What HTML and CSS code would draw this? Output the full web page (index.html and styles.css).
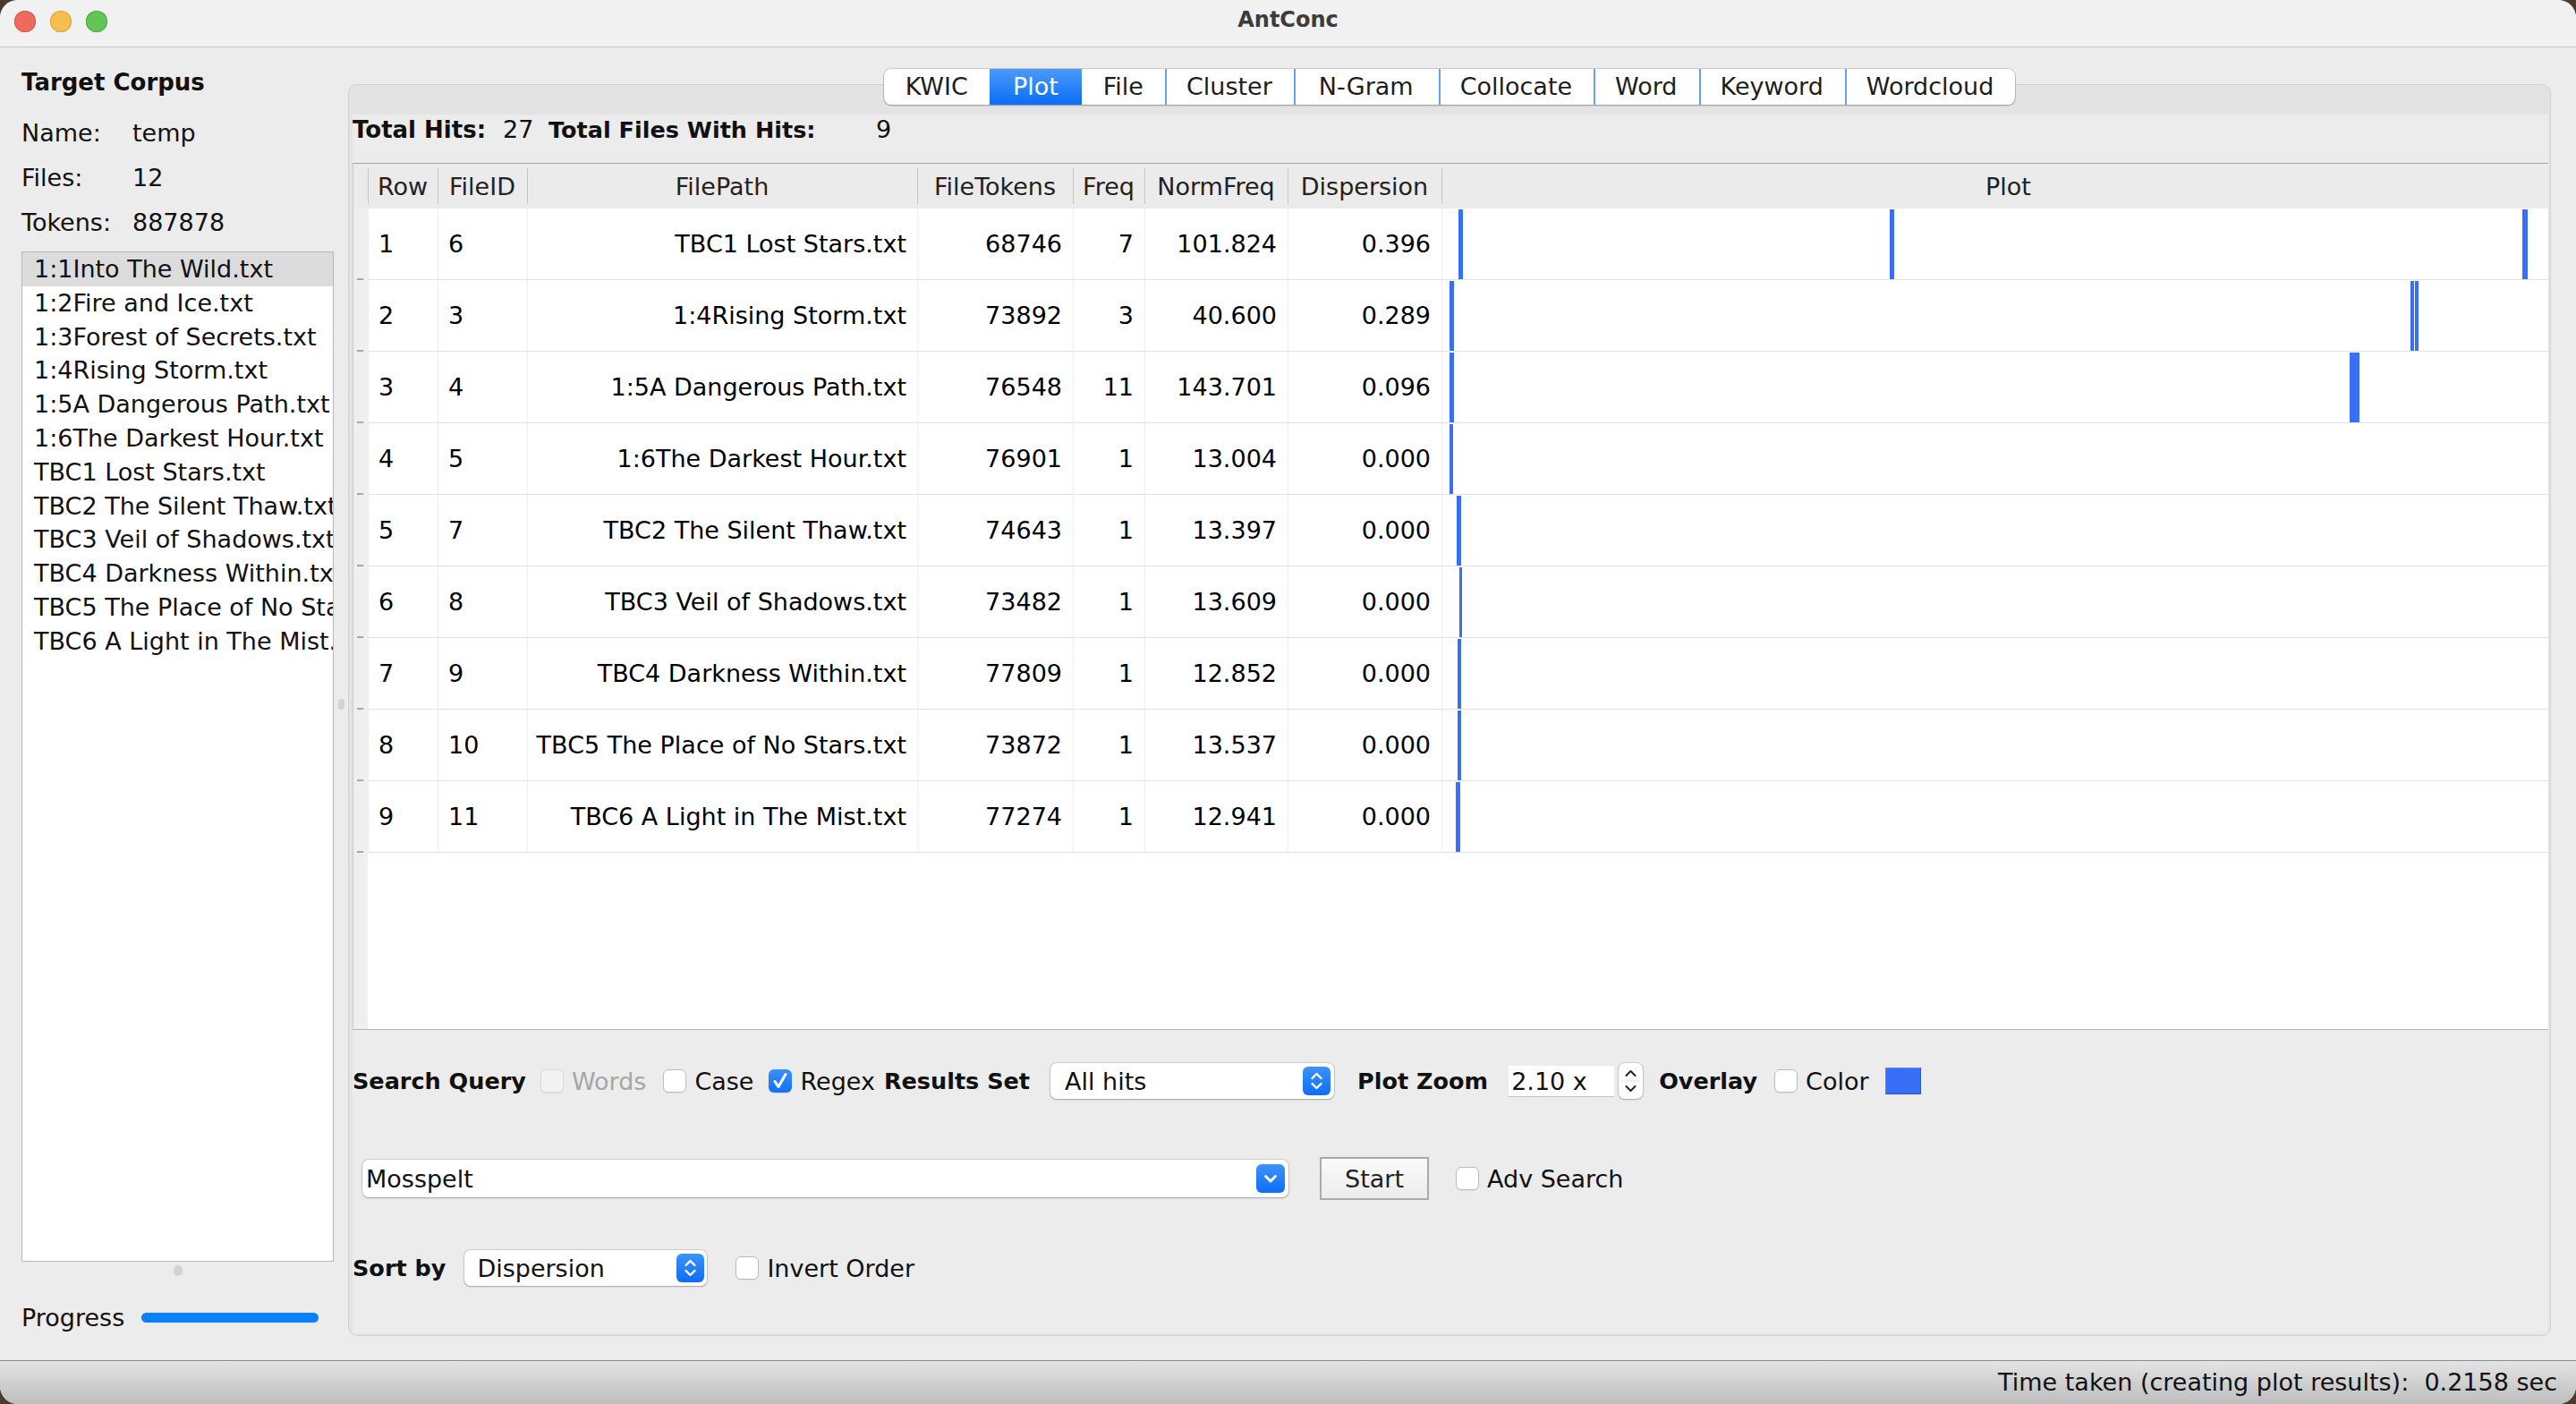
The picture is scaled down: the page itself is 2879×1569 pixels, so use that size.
FILE: index.html
```html
<!DOCTYPE html>
<html>
<head>
<meta charset="utf-8">
<title>AntConc</title>
<link rel="stylesheet" href="styles.css">
</head>
<body>
<div class="window">
  <header class="titlebar">
    <div class="lights"><span class="light red"></span><span class="light yellow"></span><span class="light green"></span></div>
    <div class="title">AntConc</div>
    <div></div>
  </header>

  <div class="content">
    <aside class="sidebar">
      <div class="side-title">Target Corpus</div>
      <div class="info"><span class="info-label">Name:</span><span>temp</span></div>
      <div class="info"><span class="info-label">Files:</span><span>12</span></div>
      <div class="info"><span class="info-label">Tokens:</span><span>887878</span></div>
      <ul class="filelist">
        <li class="sel">1:1Into The Wild.txt</li>
        <li>1:2Fire and Ice.txt</li>
        <li>1:3Forest of Secrets.txt</li>
        <li>1:4Rising Storm.txt</li>
        <li>1:5A Dangerous Path.txt</li>
        <li>1:6The Darkest Hour.txt</li>
        <li>TBC1 Lost Stars.txt</li>
        <li>TBC2 The Silent Thaw.txt</li>
        <li>TBC3 Veil of Shadows.txt</li>
        <li>TBC4 Darkness Within.txt</li>
        <li>TBC5 The Place of No Stars.txt</li>
        <li>TBC6 A Light in The Mist.txt</li>
      </ul>
      <div class="hsplit"><span class="dot"></span></div>
      <div class="progress"><span>Progress</span><span class="pbar"></span></div>
    </aside>

    <div class="vsplit"><span class="dot"></span></div>

    <main class="main">
      <nav class="tabs">
        <span class="tab">KWIC</span>
        <span class="tab sel wide">Plot</span>
        <span class="tab">File</span>
        <span class="tab sep">Cluster</span>
        <span class="tab sep wide2">N-Gram</span>
        <span class="tab sep">Collocate</span>
        <span class="tab sep">Word</span>
        <span class="tab sep">Keyword</span>
        <span class="tab sep">Wordcloud</span>
      </nav>

      <section class="panel">
        <div class="inner">
          <div class="stats">
            <span class="b st-hits">Total Hits:</span>
            <span class="st-hitsv">27</span>
            <span class="b st-files">Total Files With Hits:</span>
            <span>9</span>
          </div>

          <div class="tablewrap">
            <div class="tr thead">
              <div class="th gut"></div>
              <div class="th">Row</div>
              <div class="th">FileID</div>
              <div class="th">FilePath</div>
              <div class="th">FileTokens</div>
              <div class="th">Freq</div>
              <div class="th">NormFreq</div>
              <div class="th">Dispersion</div>
              <div class="th th-plot">Plot</div>
            </div>

            <div class="tr">
              <div class="td gut"></div><div class="td">1</div><div class="td">6</div>
              <div class="td r">TBC1 Lost Stars.txt</div><div class="td r">68746</div><div class="td r">7</div>
              <div class="td r">101.824</div><div class="td r">0.396</div>
              <div class="td plot"><i class="hit" style="left:18px;width:5px"></i><i class="hit" style="left:500px;width:5px"></i><i class="hit" style="left:1207px;width:6px"></i></div>
            </div>
            <div class="tr">
              <div class="td gut"></div><div class="td">2</div><div class="td">3</div>
              <div class="td r">1:4Rising Storm.txt</div><div class="td r">73892</div><div class="td r">3</div>
              <div class="td r">40.600</div><div class="td r">0.289</div>
              <div class="td plot"><i class="hit" style="left:8px;width:5px"></i><i class="hit" style="left:1082px;width:4px"></i><i class="hit" style="left:1087px;width:4px"></i></div>
            </div>
            <div class="tr">
              <div class="td gut"></div><div class="td">3</div><div class="td">4</div>
              <div class="td r">1:5A Dangerous Path.txt</div><div class="td r">76548</div><div class="td r">11</div>
              <div class="td r">143.701</div><div class="td r">0.096</div>
              <div class="td plot"><i class="hit" style="left:8px;width:5px"></i><i class="hit" style="left:1014px;width:11px"></i></div>
            </div>
            <div class="tr">
              <div class="td gut"></div><div class="td">4</div><div class="td">5</div>
              <div class="td r">1:6The Darkest Hour.txt</div><div class="td r">76901</div><div class="td r">1</div>
              <div class="td r">13.004</div><div class="td r">0.000</div>
              <div class="td plot"><i class="hit" style="left:8px;width:4px"></i></div>
            </div>
            <div class="tr">
              <div class="td gut"></div><div class="td">5</div><div class="td">7</div>
              <div class="td r">TBC2 The Silent Thaw.txt</div><div class="td r">74643</div><div class="td r">1</div>
              <div class="td r">13.397</div><div class="td r">0.000</div>
              <div class="td plot"><i class="hit" style="left:16px;width:5px"></i></div>
            </div>
            <div class="tr">
              <div class="td gut"></div><div class="td">6</div><div class="td">8</div>
              <div class="td r">TBC3 Veil of Shadows.txt</div><div class="td r">73482</div><div class="td r">1</div>
              <div class="td r">13.609</div><div class="td r">0.000</div>
              <div class="td plot"><i class="hit" style="left:19px;width:3px"></i></div>
            </div>
            <div class="tr">
              <div class="td gut"></div><div class="td">7</div><div class="td">9</div>
              <div class="td r">TBC4 Darkness Within.txt</div><div class="td r">77809</div><div class="td r">1</div>
              <div class="td r">12.852</div><div class="td r">0.000</div>
              <div class="td plot"><i class="hit" style="left:17px;width:4px"></i></div>
            </div>
            <div class="tr">
              <div class="td gut"></div><div class="td">8</div><div class="td">10</div>
              <div class="td r">TBC5 The Place of No Stars.txt</div><div class="td r">73872</div><div class="td r">1</div>
              <div class="td r">13.537</div><div class="td r">0.000</div>
              <div class="td plot"><i class="hit" style="left:17px;width:4px"></i></div>
            </div>
            <div class="tr">
              <div class="td gut"></div><div class="td">9</div><div class="td">11</div>
              <div class="td r">TBC6 A Light in The Mist.txt</div><div class="td r">77274</div><div class="td r">1</div>
              <div class="td r">12.941</div><div class="td r">0.000</div>
              <div class="td plot"><i class="hit" style="left:15px;width:5px"></i></div>
            </div>
          </div>

          <div class="ctrl row-search">
            <span class="b">Search Query</span>
            <label class="cb disabled m-words"><span class="box"></span><span>Words</span></label>
            <label class="cb m-case"><span class="box"></span><span>Case</span></label>
            <label class="cb m-regex"><span class="box on"><svg width="26" height="26" viewBox="0 0 26 26"><path d="M7 13.5 L11 19.5 L19 5.5" fill="none" stroke="#fff" stroke-width="3" stroke-linecap="round" stroke-linejoin="round"/></svg></span><span>Regex</span></label>
            <span class="b m-results">Results Set</span>
            <div class="combo combo-results"><span class="combo-text">All hits</span><span class="stepper"><svg width="31" height="32" viewBox="0 0 31 32"><path d="M10.5 13 L15.5 8 L20.5 13 M10.5 19 L15.5 24 L20.5 19" fill="none" stroke="#fff" stroke-width="2.4" stroke-linecap="round" stroke-linejoin="round"/></svg></span></div>
            <span class="b m-zoom">Plot Zoom</span>
            <span class="spin-field">2.10 x</span>
            <span class="spin-arrows"><svg width="27" height="40" viewBox="0 0 27 40"><path d="M8.5 14 L13.5 9 L18.5 14 M8.5 26 L13.5 31 L18.5 26" fill="none" stroke="#222" stroke-width="2" stroke-linecap="round" stroke-linejoin="round"/><path d="M3 20 H24" stroke="#e2e2e2" stroke-width="1"/></svg></span>
            <span class="b m-overlay">Overlay</span>
            <label class="cb m-color"><span class="box"></span><span>Color</span></label>
            <span class="swatch"></span>
          </div>

          <div class="ctrl row-query">
            <div class="combo combo-query"><span class="combo-text">Mosspelt</span><span class="dropbtn"><svg width="32" height="32" viewBox="0 0 32 32"><path d="M10.5 13.5 L16 19 L21.5 13.5" fill="none" stroke="#fff" stroke-width="3" stroke-linecap="round" stroke-linejoin="round"/></svg></span></div>
            <span class="btn">Start</span>
            <label class="cb m-adv"><span class="box"></span><span>Adv Search</span></label>
          </div>

          <div class="ctrl row-sort">
            <span class="b">Sort by</span>
            <div class="combo combo-sort"><span class="combo-text">Dispersion</span><span class="stepper"><svg width="31" height="32" viewBox="0 0 31 32"><path d="M10.5 13 L15.5 8 L20.5 13 M10.5 19 L15.5 24 L20.5 19" fill="none" stroke="#fff" stroke-width="2.4" stroke-linecap="round" stroke-linejoin="round"/></svg></span></div>
            <label class="cb m-invert"><span class="box"></span><span>Invert Order</span></label>
          </div>
        </div>
      </section>
    </main>
  </div>

  <footer class="status">Time taken (creating plot results):&nbsp; 0.2158 sec</footer>
</div>
</body>
</html>
```

FILE: styles.css
```css
* { box-sizing: border-box; margin: 0; padding: 0; }
html, body { width: 2879px; height: 1569px; overflow: hidden; }
body {
  background: #4a3a2e;
  font-family: "DejaVu Sans", "Liberation Sans", sans-serif;
  font-size: 27px;
  color: #111;
}
.b { font-weight: bold; font-size: 25.5px; }

.window {
  width: 2879px; height: 1569px;
  border-radius: 20px; overflow: hidden;
  background: #ececec;
  display: flex; flex-direction: column;
}

/* title bar */
.titlebar {
  height: 53px; flex: none;
  background: #f1f1f1;
  border-bottom: 1px solid #c8c8c8;
  display: grid; grid-template-columns: 1fr auto 1fr;
}
.lights { display: flex; gap: 16px; padding: 12px 0 0 16px; }
.light { width: 24px; height: 24px; border-radius: 50%; }
.red { background: #ee6a5f; box-shadow: inset 0 0 0 1px #d4574c; }
.yellow { background: #f5be4f; box-shadow: inset 0 0 0 1px #dba23b; }
.green { background: #62c655; box-shadow: inset 0 0 0 1px #4aa93f; }
.title { font-weight: bold; font-size: 24px; line-height: 44px; color: #3c3c3c; }

.content { flex: 1; display: flex; min-height: 0; }

/* sidebar */
.sidebar { width: 373px; flex: none; padding-left: 24px; display: flex; flex-direction: column; }
.side-title { font-weight: bold; font-size: 26px; line-height: 34px; margin-top: 22px; margin-bottom: 14px; }
.info { display: flex; height: 50px; align-items: center; }
.info-label { width: 124px; }
.filelist {
  list-style: none; margin-top: 8px; height: 1129px;
  background: #fff; border: 1px solid #b9b9b9; overflow: hidden;
}
.filelist li { height: 37.8px; line-height: 37.8px; padding-left: 13px; white-space: nowrap; overflow: hidden; }
.filelist li.sel { background: #dcdcdc; }
.hsplit { height: 20px; display: flex; justify-content: center; align-items: center; }
.dot { width: 10px; height: 12px; border-radius: 6px; background: #d3d3d3; }
.progress { display: flex; align-items: center; margin-top: 25px; height: 34px; }
.pbar { width: 198px; height: 11px; border-radius: 6px; background: #0e7ffa; margin-left: 19px; }

.vsplit { width: 16px; flex: none; display: flex; align-items: center; justify-content: center; }
.vsplit .dot { width: 7px; height: 12px; }

/* main */
.main { width: 2462px; flex: none; display: flex; flex-direction: column; align-items: center; }
.tabs {
  margin-top: 24px; height: 40px; display: flex;
  background: #fff; border-radius: 8px;
  box-shadow: 0 0 0 1px rgba(0,0,0,0.13), 0 1px 2px rgba(0,0,0,0.25);
  position: relative; z-index: 1; overflow: hidden;
}
.tab { padding: 0 24px; line-height: 40px; color: #1d1d1d; }
.tab.wide { padding: 0 26px; }
.tab.wide2 { padding: 0 28px; }
.tab.sel { background: linear-gradient(#4a9bf9, #0a6cf8); color: #fff; }
.tab.sep { box-shadow: inset 2px 0 0 rgba(40,120,245,0.7); }

.panel {
  align-self: stretch; margin-top: -23px; height: 1399px;
  border: 1px solid #d2d2d2; border-radius: 10px;
  background: #e3e3e3;
  padding: 33px 2px 2px 4px;
}
.inner { height: 100%; background: #ececec; display: flex; flex-direction: column; }

.stats { height: 54px; display: flex; line-height: 34px; flex: none; }
.st-hits { width: 168px; font-size: 26px; }
.st-hitsv { width: 51px; }
.st-files { width: 366px; }

/* table */
.tablewrap {
  height: 969px; flex: none;
  border-top: 1px solid #a4a4a4; border-bottom: 1px solid #b4b4b4; border-left: 1px solid #cbcbcb;
  background: linear-gradient(to right, #efefef 16px, #fff 16px);
}
.tr { display: grid; grid-template-columns: 16px 78px 100px 436px 174px 80px 160px 172px 1fr; }
.thead { height: 50px; background: #ebebeb; }
.th {
  display: flex; align-items: center; justify-content: center; color: #222;
  background: linear-gradient(#c5c5c5, #c5c5c5) no-repeat left center / 1px 40px;
}
.th.gut { background: none; }
.th-plot { padding-left: 30px; }
.td {
  height: 80px; display: flex; align-items: center;
  padding: 0 12px 0 11px;
  border-bottom: 1px solid #e1e1e1; border-left: 1px solid #efefef;
  white-space: nowrap; color: #000;
}
.td.r { justify-content: flex-end; }
.td.gut {
  border: none; padding: 0;
  background: linear-gradient(#a9a9a9, #a9a9a9) no-repeat 4px 78px / 7px 2px;
}
.td.plot { position: relative; padding: 0; }
.hit { position: absolute; top: 1px; bottom: 0; background: #386ff6; }

/* controls */
.ctrl { display: flex; align-items: center; flex: none; }
.row-search { margin-top: 36px; height: 42px; }
.row-query { margin-top: 64px; height: 48px; padding-left: 11px; }
.row-sort { margin-top: 56px; height: 40px; }

.cb { display: flex; align-items: center; }
.box {
  width: 26px; height: 26px; border-radius: 6px; margin-right: 9px;
  background: #fff; border: 1px solid #bcbcbc;
  box-shadow: 0 1px 1px rgba(0,0,0,0.06);
  display: flex; align-items: center; justify-content: center;
}
.box.on { background: linear-gradient(#3b90f9, #1170f8); border: none; }
.cb.disabled .box { background: #f3f3f3; border-color: #dadada; }
.cb.disabled { color: #a6a6a6; }

.m-words { margin-left: 16px; }
.m-case { margin-left: 19px; }
.m-regex { margin-left: 17px; }
.m-results { margin-left: 10px; }
.m-zoom { margin-left: 26px; }
.m-overlay { margin-left: 18px; }
.m-color { margin-left: 19px; }
.m-adv { margin-left: 30px; }
.m-invert { margin-left: 32px; }

.combo {
  height: 40px; background: #fff; border-radius: 7px;
  box-shadow: 0 0 0 1px rgba(0,0,0,0.12), 0 1px 2px rgba(0,0,0,0.22);
  display: flex; align-items: center; justify-content: space-between;
}
.combo-results { width: 317px; margin-left: 23px; padding: 0 4px 0 16px; }
.combo-sort { width: 271px; margin-left: 21px; padding: 0 3px 0 14px; }
.combo-query { width: 1035px; height: 42px; padding: 0 4px 0 4px; }
.stepper, .dropbtn {
  width: 31px; height: 32px; border-radius: 6px;
  background: linear-gradient(#3d93f9, #0c6ef8);
  display: flex;
}
.dropbtn { width: 32px; }

.spin-field {
  width: 118px; height: 35px; margin-left: 23px; padding-left: 3px;
  background: #fff; border-bottom: 1px solid #c4c4c4; line-height: 35px;
}
.spin-arrows {
  width: 27px; height: 40px; margin-left: 5px; border-radius: 7px;
  background: #fff; box-shadow: 0 0 0 1px rgba(0,0,0,0.12), 0 1px 2px rgba(0,0,0,0.2);
  display: flex;
}
.swatch {
  width: 40px; height: 30px; margin-left: 18px;
  background: #386ff6; box-shadow: inset -1px -1px 0 #2a56c4, inset 1px 1px 0 #5a88f7;
}

.btn {
  width: 122px; height: 48px; margin-left: 35px;
  border: 2px solid #a9a9a9;
  background: linear-gradient(#fafafa, #ececec);
  display: flex; align-items: center; justify-content: center; color: #222;
}

/* status bar */
.status {
  height: 49px; flex: none;
  border-top: 1px solid #8c8c8c;
  background: linear-gradient(#e4e4e4, #bdbdbd);
  text-align: right; padding-right: 21px; line-height: 48px; color: #111;
}
```
